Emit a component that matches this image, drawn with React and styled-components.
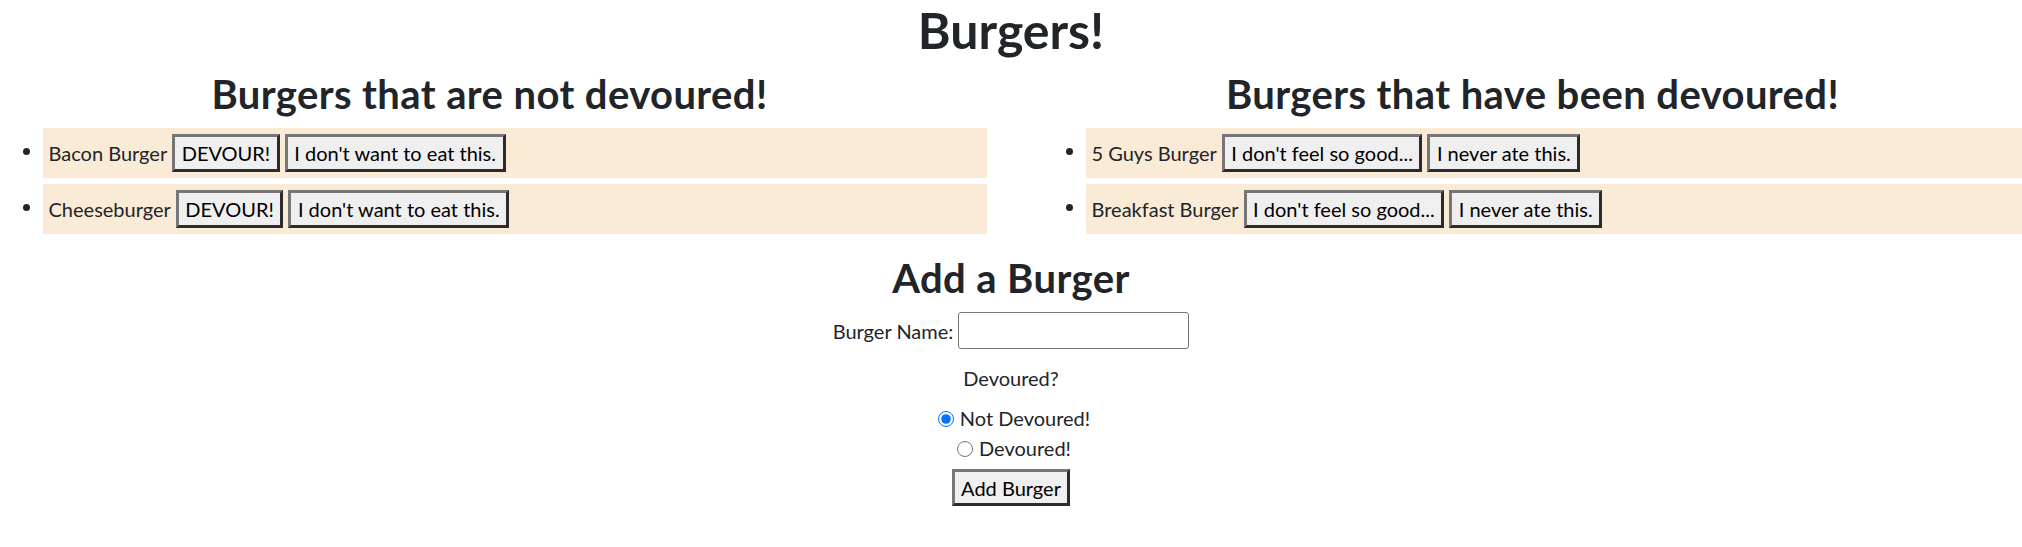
import React from "react";
import styled, { createGlobalStyle } from "styled-components";

const GlobalStyle = createGlobalStyle`
  html, body {
    margin: 0;
    padding: 0;
    overflow-x: hidden;
    background: #ffffff;
  }
  body {
    font-family: Lato, "Open Sans", sans-serif;
    font-size: 20px;
    line-height: 1.5;
    color: #212529;
  }
`;

const Page = styled.div`
  width: 100%;
  overflow: hidden;
`;

const Title = styled.h1`
  margin: 0 0 10px;
  font-size: 50px;
  font-weight: 700;
  line-height: 1.2;
  text-align: center;
`;

const Columns = styled.div`
  display: flex;
  margin: 0 -32px;
`;

const Column = styled.div`
  flex: 1 1 0;
  min-width: 0;
  padding: 0 24.5px;
`;

const SubTitle = styled.h2`
  margin: 0 0 10px;
  font-size: 40px;
  font-weight: 700;
  line-height: 1.2;
  letter-spacing: 0.4px;
  text-align: center;
`;

const BurgerList = styled.ul`
  margin: 0 0 20px;
  padding-left: 50px;
`;

const BurgerItem = styled.li`
  background: antiquewhite;
  padding: 6px;
  margin-bottom: 6px;
  line-height: 30px;

  &:last-child {
    margin-bottom: 0;
  }
`;

const ItemRow = styled.span`
  display: inline-flex;
  align-items: center;
  gap: 5px;
  vertical-align: middle;
`;

const ActionButton = styled.button`
  font-family: inherit;
  font-size: 20px;
  line-height: 30px;
  height: 38px;
  padding: 1px 6.5px;
  color: #000000;
  background: #efefef;
  border: 3px solid;
  border-color: #767676 #2b2b2b #2b2b2b #767676;
  border-radius: 0;
  cursor: pointer;
`;

const Form = styled.form`
  display: flex;
  flex-direction: column;
  align-items: center;
`;

const FieldRow = styled.div`
  display: flex;
  align-items: center;
  gap: 5px;
`;

const NameInput = styled.input`
  box-sizing: border-box;
  width: 231px;
  height: 37px;
  border: 1px solid #767676;
  border-radius: 3px;
  padding: 1px 3px;
  font-family: inherit;
  font-size: 20px;
`;

const Question = styled.p`
  margin: 14px 0 10px;
`;

const RadioRow = styled.label`
  display: flex;
  align-items: flex-end;
  height: 30px;
`;

const Radio = styled.input`
  width: 16px;
  height: 16px;
  margin: 0 6px 6px 6px;
  accent-color: #0075ff;
`;

const SubmitButton = styled(ActionButton)`
  margin-top: 6px;
  height: 37px;
`;

const notDevoured = ["Bacon Burger", "Cheeseburger"];
const devoured = ["5 Guys Burger", "Breakfast Burger"];

export default function App() {
  return (
    <Page>
      <GlobalStyle />
      <Title>Burgers!</Title>
      <Columns>
        <Column>
          <SubTitle>Burgers that are not devoured!</SubTitle>
          <BurgerList>
            {notDevoured.map((name) => (
              <BurgerItem key={name}>
                <ItemRow>
                  <span>{name}</span>
                  <ActionButton type="button">DEVOUR!</ActionButton>
                  <ActionButton type="button">I don't want to eat this.</ActionButton>
                </ItemRow>
              </BurgerItem>
            ))}
          </BurgerList>
        </Column>
        <Column>
          <SubTitle>Burgers that have been devoured!</SubTitle>
          <BurgerList>
            {devoured.map((name) => (
              <BurgerItem key={name}>
                <ItemRow>
                  <span>{name}</span>
                  <ActionButton type="button">I don't feel so good...</ActionButton>
                  <ActionButton type="button">I never ate this.</ActionButton>
                </ItemRow>
              </BurgerItem>
            ))}
          </BurgerList>
        </Column>
      </Columns>
      <SubTitle>Add a Burger</SubTitle>
      <Form onSubmit={(e) => e.preventDefault()}>
        <FieldRow>
          <label htmlFor="burger-name">Burger Name:</label>
          <NameInput id="burger-name" type="text" />
        </FieldRow>
        <Question>Devoured?</Question>
        <RadioRow>
          <Radio type="radio" name="devoured" value="false" defaultChecked />
          Not Devoured!
        </RadioRow>
        <RadioRow>
          <Radio type="radio" name="devoured" value="true" />
          Devoured!
        </RadioRow>
        <SubmitButton type="submit">Add Burger</SubmitButton>
      </Form>
    </Page>
  );
}
